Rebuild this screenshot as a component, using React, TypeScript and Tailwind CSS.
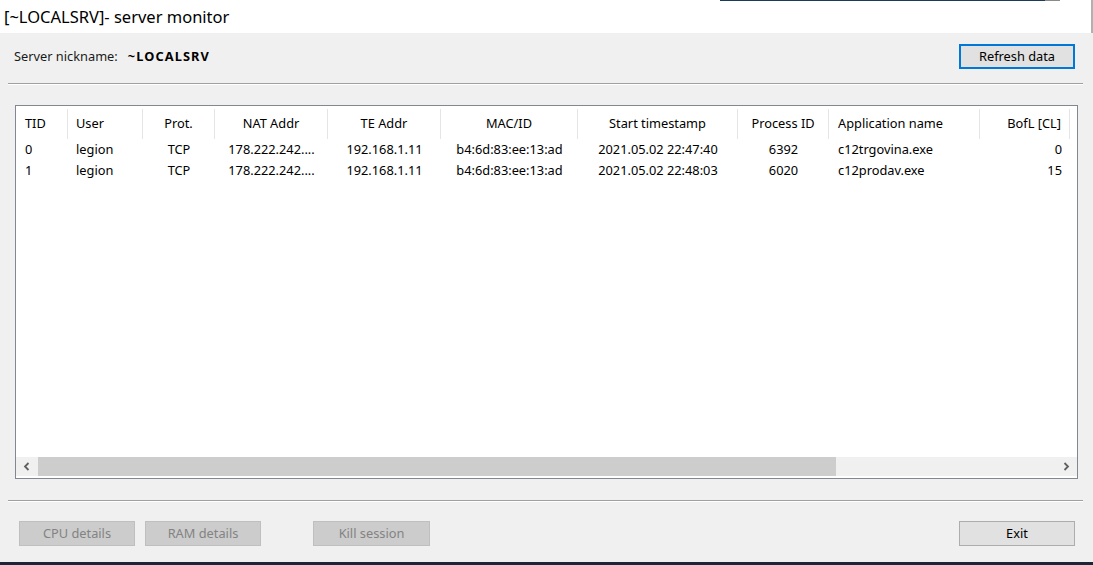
import React from "react";

/**
 * Server monitor window
 */
const columns = [
  { name: "TID", key: "tid", width: "w-[52px]", align: "text-left pl-[9px]" },
  { name: "User", key: "user", width: "w-[75px]", align: "text-left pl-[8px]" },
  { name: "Prot.", key: "prot", width: "w-[72px]", align: "text-center" },
  { name: "NAT Addr", key: "nat", width: "w-[113px]", align: "text-center" },
  { name: "TE Addr", key: "te", width: "w-[113px]", align: "text-center" },
  { name: "MAC/ID", key: "mac", width: "w-[137px]", align: "text-center" },
  { name: "Start timestamp", key: "start", width: "w-[160px]", align: "text-center" },
  { name: "Process ID", key: "pid", width: "w-[91px]", align: "text-center" },
  { name: "Application name", key: "app", width: "w-[151px]", align: "text-left pl-[9px]" },
  { name: "BofL [CL]", key: "bofl", width: "w-[90px]", align: "text-right pr-[8px]" },
];

const sessions: Record<string, string>[] = [
  {
    tid: "0",
    user: "legion",
    prot: "TCP",
    nat: "178.222.242....",
    te: "192.168.1.11",
    mac: "b4:6d:83:ee:13:ad",
    start: "2021.05.02 22:47:40",
    pid: "6392",
    app: "c12trgovina.exe",
    bofl: "0",
  },
  {
    tid: "1",
    user: "legion",
    prot: "TCP",
    nat: "178.222.242....",
    te: "192.168.1.11",
    mac: "b4:6d:83:ee:13:ad",
    start: "2021.05.02 22:48:03",
    pid: "6020",
    app: "c12prodav.exe",
    bofl: "15",
  },
];

const Chevron = ({ dir }: { dir: "left" | "right" }) => (
  <svg width="8" height="9" viewBox="0 0 8 9">
    <path
      d={dir === "left" ? "M5.5 1 L2 4.5 L5.5 8" : "M2.5 1 L6 4.5 L2.5 8"}
      fill="none"
      stroke="#606060"
      strokeWidth="1.8"
    />
  </svg>
);

export default function App() {
  return (
    <div
      className="w-[1093px] h-[565px] bg-[#f0f0f0] flex flex-col text-[12.8px] text-black overflow-hidden"
      style={{ fontFamily: '"Noto Sans", "Open Sans", sans-serif' }}
    >
      {/* Title bar */}
      <div className="h-[33px] bg-white border-r-2 border-[#b0b0b0] flex flex-col">
        <div className="flex h-px">
          <div className="w-[720px]" />
          <div className="w-[325px] bg-[#1d3a56]" />
          <div className="w-[15px] bg-[#8a8a8a]" />
        </div>
        <div className="flex-1 flex items-center pl-[4px] text-[16.5px] leading-none">
          [~LOCALSRV]- server monitor
        </div>
      </div>

      {/* Body */}
      <div className="flex-1 flex flex-col">
        <div className="mt-[11px] h-[25px] flex items-center justify-between pl-[14px] pr-[18px]">
          <div className="flex items-center">
            <span className="text-[#1a1a1a]">Server nickname:</span>
            <span className="ml-[10px] font-bold tracking-[1.1px]">~LOCALSRV</span>
          </div>
          <button className="w-[116px] h-[25px] bg-[#e1e1e1] border-2 border-[#0078d7]">
            Refresh data
          </button>
        </div>

        <div className="mt-[14px] ml-[8px] w-[1075px] border-t border-[#a0a0a0] border-b border-b-white" />

        {/* Session list */}
        <div className="mt-[20px] ml-[15px] w-[1063px] h-[374px] bg-white border border-[#828790] flex flex-col">
          <div className="h-[33px] flex items-center">
            {columns.map(col => (
              <div
                key={col.key}
                className={`${col.width} h-[30px] mt-[3px] flex items-center border-r border-[#e5e5e5] ${col.align}`}
              >
                <span className="w-full">{col.name}</span>
              </div>
            ))}
          </div>
          {sessions.map(row => (
            <div key={row.tid} className="h-[21px] flex items-center">
              {columns.map(col => (
                <div key={col.key} className={`${col.width} whitespace-nowrap ${col.align}`}>
                  {row[col.key]}
                </div>
              ))}
            </div>
          ))}
          <div className="flex-1" />
          {/* Horizontal scrollbar */}
          <div className="h-[19px] mb-[2px] bg-[#f0f0f0] flex items-center">
            <div className="w-[22px] flex items-center justify-center">
              <Chevron dir="left" />
            </div>
            <div className="w-[798px] h-full bg-[#cdcdcd]" />
            <div className="flex-1" />
            <div className="w-[22px] flex items-center justify-center">
              <Chevron dir="right" />
            </div>
          </div>
        </div>

        <div className="mt-[21px] ml-[8px] w-[1075px] border-t border-[#a0a0a0] border-b border-b-white" />

        {/* Action buttons */}
        <div className="mt-[19px] h-[25px] flex items-center pl-[19px] pr-[18px]">
          <button className="w-[116px] h-[25px] bg-[#cccccc] border border-[#bfbfbf] text-[#838383]">
            CPU details
          </button>
          <button className="ml-[10px] w-[116px] h-[25px] bg-[#cccccc] border border-[#bfbfbf] text-[#838383]">
            RAM details
          </button>
          <button className="ml-[52px] w-[117px] h-[25px] bg-[#cccccc] border border-[#bfbfbf] text-[#838383]">
            Kill session
          </button>
          <div className="flex-1" />
          <button className="w-[116px] h-[25px] bg-[#e1e1e1] border border-[#adadad]">Exit</button>
        </div>
      </div>

      <div className="h-[3px] bg-[#1c2635]" />
    </div>
  );
}
